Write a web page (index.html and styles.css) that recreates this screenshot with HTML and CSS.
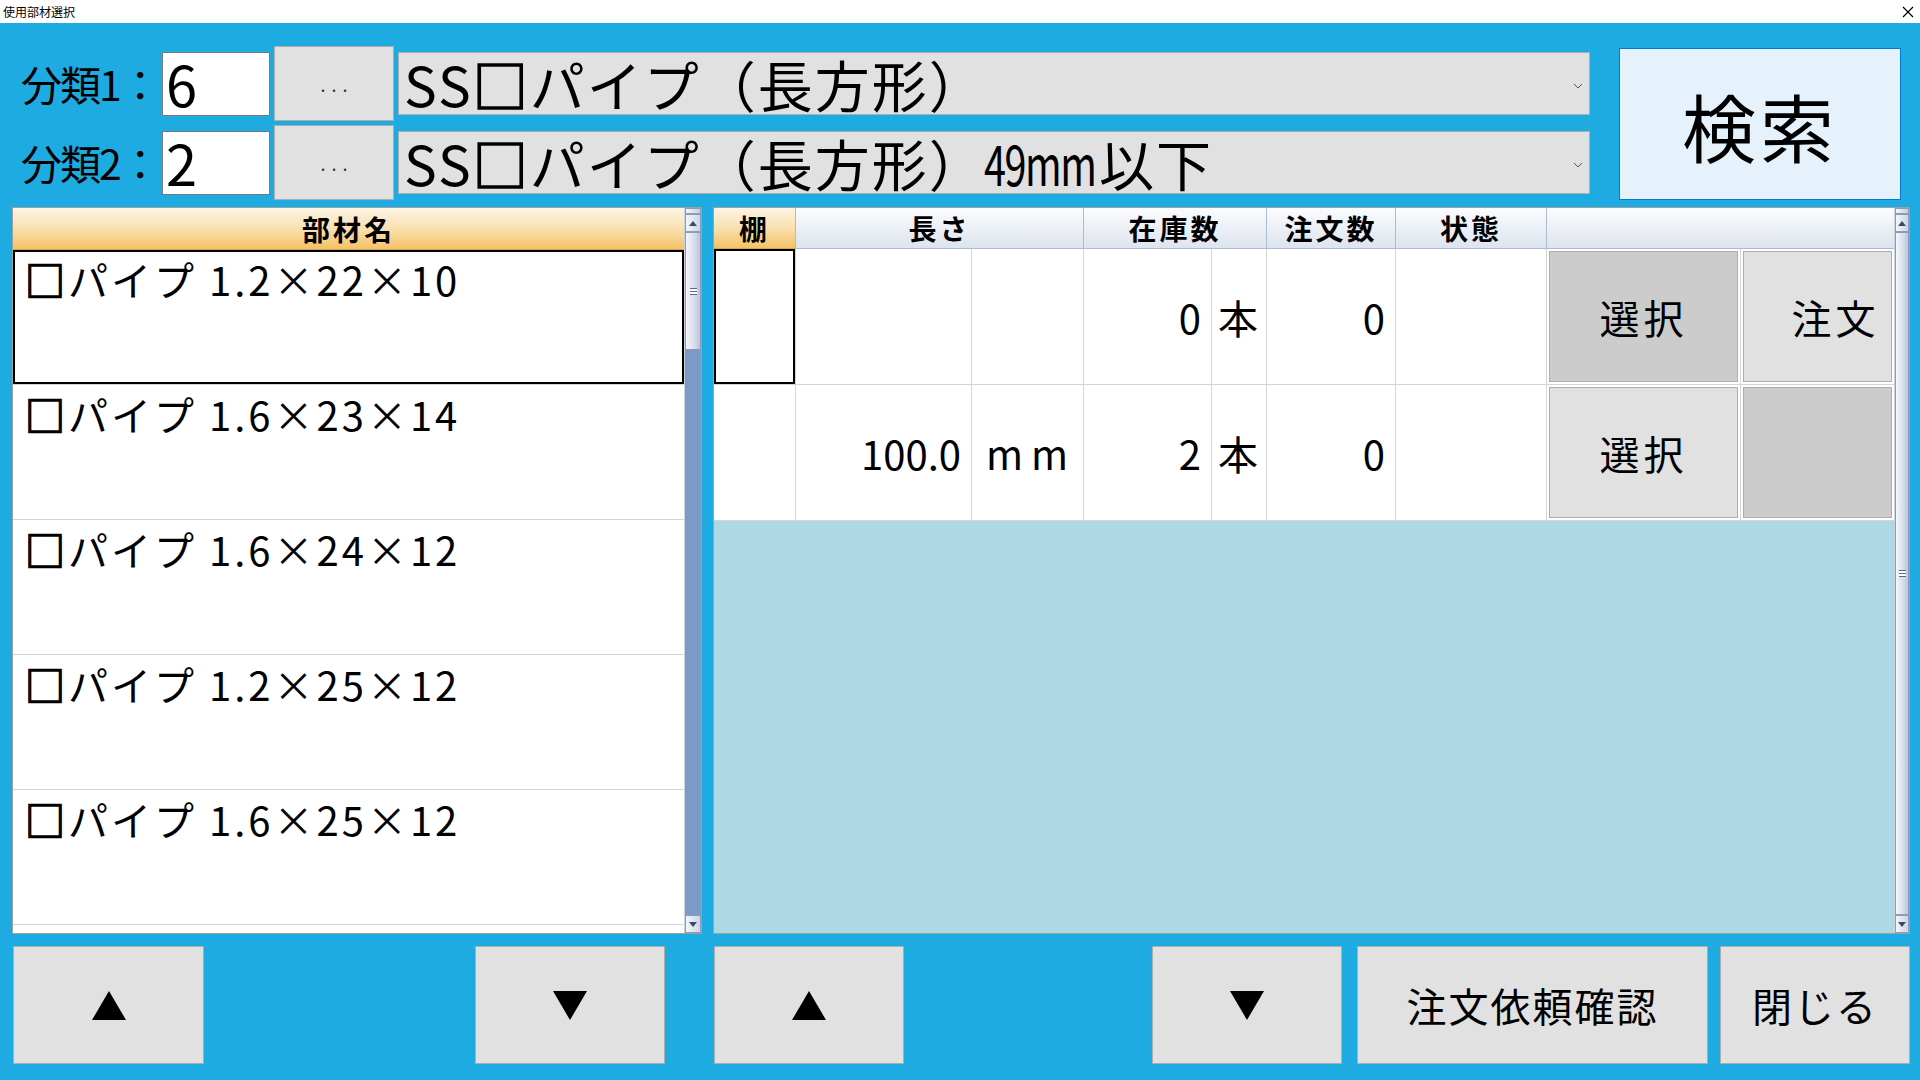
FILE: index.html
```html
<!DOCTYPE html>
<html lang="ja">
<head>
    <meta charset="UTF-8">
    <title>使用部材選択</title>
    <link rel="stylesheet" href="styles.css">
</head>
<body>
    <div class="titlebar">
        <span class="title">使用部材選択</span>
        <svg class="close" width="12" height="12" viewBox="0 0 12 12"><path d="M1 1L11 11M11 1L1 11" stroke="#000" stroke-width="1.2" fill="none"/></svg>
    </div>

    <div class="window">
        <div class="top">
            <div class="filters">
                <div class="filter-row">
                    <label class="filter-label">分類1：</label>
                    <div class="code-box">6</div>
                    <button class="dots-btn">...</button>
                    <div class="combo">
                        <span class="combo-text">SS<span class="sq">□</span>パイプ（長方形）</span>
                        <svg class="chevron" width="10" height="6" viewBox="0 0 10 6"><path d="M1 1L5 5L9 1" stroke="#555" stroke-width="1" fill="none"/></svg>
                    </div>
                </div>
                <div class="filter-row">
                    <label class="filter-label">分類2：</label>
                    <div class="code-box">2</div>
                    <button class="dots-btn">...</button>
                    <div class="combo">
                        <span class="combo-text">SS<span class="sq">□</span>パイプ（長方形） <span class="narrow">49mm</span>以下</span>
                        <svg class="chevron" width="10" height="6" viewBox="0 0 10 6"><path d="M1 1L5 5L9 1" stroke="#555" stroke-width="1" fill="none"/></svg>
                    </div>
                </div>
            </div>
            <button class="search-btn">検索</button>
        </div>

        <div class="middle">
            <!-- 部材リスト -->
            <div class="list">
                <div class="list-main">
                    <div class="list-head">部材名</div>
                    <div class="list-row current"><span class="sq">□</span>パイプ 1.2×22×10</div>
                    <div class="list-row"><span class="sq">□</span>パイプ 1.6×23×14</div>
                    <div class="list-row"><span class="sq">□</span>パイプ 1.6×24×12</div>
                    <div class="list-row"><span class="sq">□</span>パイプ 1.2×25×12</div>
                    <div class="list-row"><span class="sq">□</span>パイプ 1.6×25×12</div>
                </div>
                <div class="vscroll">
                    <div class="sb-split"></div>
                    <div class="sb-arrow"><svg width="8" height="5" viewBox="0 0 8 5"><path d="M0 5L4 0L8 5Z" fill="#3d4a63"/></svg></div>
                    <div class="sb-thumb short"><span class="grip"></span></div>
                    <div class="sb-track"></div>
                    <div class="sb-arrow"><svg width="8" height="5" viewBox="0 0 8 5"><path d="M0 0L4 5L8 0Z" fill="#3d4a63"/></svg></div>
                </div>
            </div>

            <!-- 在庫グリッド -->
            <div class="grid-wrap">
                <div class="grid-main">
                    <div class="grid-head">
                        <div class="gh current">棚</div>
                        <div class="gh">長さ</div>
                        <div class="gh">在庫数</div>
                        <div class="gh">注文数</div>
                        <div class="gh">状態</div>
                        <div class="gh"></div>
                    </div>
                    <div class="grid-row">
                        <div class="gc focus"></div>
                        <div class="gc num"></div>
                        <div class="gc unit"></div>
                        <div class="gc num">0</div>
                        <div class="gc unit">本</div>
                        <div class="gc num">0</div>
                        <div class="gc"></div>
                        <div class="gc btn-cell"><button class="cell-btn pressed">選択</button></div>
                        <div class="gc btn-cell"><button class="cell-btn order">注文</button></div>
                    </div>
                    <div class="grid-row">
                        <div class="gc"></div>
                        <div class="gc num">100.0</div>
                        <div class="gc unit mm">mm</div>
                        <div class="gc num">2</div>
                        <div class="gc unit">本</div>
                        <div class="gc num">0</div>
                        <div class="gc"></div>
                        <div class="gc btn-cell"><button class="cell-btn">選択</button></div>
                        <div class="gc btn-cell"><button class="cell-btn pressed"></button></div>
                    </div>
                    <div class="grid-empty"></div>
                </div>
                <div class="vscroll thin">
                    <div class="sb-split"></div>
                    <div class="sb-arrow"><svg width="8" height="5" viewBox="0 0 8 5"><path d="M0 5L4 0L8 5Z" fill="#3d4a63"/></svg></div>
                    <div class="sb-thumb full"><span class="grip"></span></div>
                    <div class="sb-arrow"><svg width="8" height="5" viewBox="0 0 8 5"><path d="M0 0L4 5L8 0Z" fill="#3d4a63"/></svg></div>
                </div>
            </div>
        </div>

        <div class="bottom">
            <button class="btn btn-up-left"><svg width="34" height="29" viewBox="0 0 34 29"><path d="M17 0L34 29H0Z" fill="#000"/></svg></button>
            <button class="btn btn-down-left"><svg width="34" height="29" viewBox="0 0 34 29"><path d="M0 0H34L17 29Z" fill="#000"/></svg></button>
            <button class="btn btn-up-right"><svg width="34" height="29" viewBox="0 0 34 29"><path d="M17 0L34 29H0Z" fill="#000"/></svg></button>
            <button class="btn btn-down-right"><svg width="34" height="29" viewBox="0 0 34 29"><path d="M0 0H34L17 29Z" fill="#000"/></svg></button>
            <button class="btn btn-confirm">注文依頼確認</button>
            <button class="btn btn-close">閉じる</button>
        </div>
    </div>
</body>
</html>
```

FILE: styles.css
```css
* {
    margin: 0;
    padding: 0;
    box-sizing: border-box;
}

body {
    width: 1920px;
    height: 1080px;
    overflow: hidden;
    background: #1eabe2;
    font-family: "Noto Sans CJK JP", "Noto Sans", sans-serif;
    color: #000;
}

button {
    font-family: inherit;
    color: #000;
    cursor: pointer;
}

.titlebar {
    height: 23px;
    background: #fff;
    display: flex;
    align-items: center;
    justify-content: space-between;
    padding: 0 6px 0 3px;
}

.title {
    font-size: 12px;
    line-height: 1;
}

/* square glyph in pipe names, drawn heavier like the original font */
.sq {
    -webkit-text-stroke: 1.6px #000;
}

/* top filter area */
.top {
    display: flex;
    padding: 23px 19px 0 21px;
    height: 178px;
}

.filters {
    flex: 1;
    display: flex;
    flex-direction: column;
    gap: 4px;
}

.filter-row {
    height: 75px;
    display: flex;
    align-items: center;
}

.filter-label {
    width: 141px;
    font-size: 41px;
    line-height: 1;
    white-space: nowrap;
    letter-spacing: -2px;
}

.code-box {
    width: 108px;
    height: 64px;
    background: #fff;
    border: 1px solid #7a7a7a;
    font-size: 56px;
    line-height: 60px;
    padding-left: 3px;
    margin-right: 4px;
}

.dots-btn {
    width: 120px;
    height: 75px;
    background: #e1e1e1;
    border: 1px solid #adadad;
    font-size: 18px;
    letter-spacing: 6px;
    padding-left: 6px;
    margin-right: 4px;
    color: #333;
}

.combo {
    flex: 1;
    height: 63px;
    background: #e1e1e1;
    border: 1px solid #adadad;
    display: flex;
    align-items: center;
    justify-content: space-between;
    padding: 0 6px 0 5px;
}

.combo-text {
    font-size: 55px;
    line-height: 1;
    white-space: nowrap;
    letter-spacing: 2px;
    word-spacing: -16px;
}

/* latin part of the label is set much narrower in the original */
.combo-text .narrow {
    display: inline-block;
    transform: scaleX(0.72);
    transform-origin: left center;
    letter-spacing: -2px;
    margin-right: -40px;
}

.chevron {
    margin-top: 4px;
}

.search-btn {
    width: 282px;
    height: 152px;
    margin: 2px 0 0 29px;
    background: #e5f1fb;
    border: 1px solid #0078d7;
    font-size: 74px;
    letter-spacing: 4px;
}

/* middle */
.middle {
    display: flex;
    gap: 11px;
    height: 727px;
    padding: 0 10px 0 12px;
    margin-top: 6px;
}

.list {
    width: 690px;
    display: flex;
    background: #fff;
    border: 1px solid #a0a0a0;
}

.list-main {
    flex: 1;
}

.list-head {
    height: 42px;
    background: linear-gradient(#fdf4e4 0%, #f9deaa 55%, #f4c266 100%);
    border-bottom: 1px solid #d9a54e;
    font-size: 28px;
    font-weight: 700;
    line-height: 1;
    letter-spacing: 3px;
    display: flex;
    align-items: center;
    justify-content: center;
}

.list-row {
    height: 135px;
    border-bottom: 1px solid #d4d4d4;
    font-size: 40px;
    line-height: 1.45;
    padding: 0 0 0 12px;
    white-space: nowrap;
    letter-spacing: 3px;
}

.list-row.current {
    box-shadow: inset 0 0 0 2px #000;
}

/* scrollbars */
.vscroll {
    width: 17px;
    display: flex;
    flex-direction: column;
    background: #7b9bc6;
    border-left: 1px solid #c8d2e0;
}

.vscroll.thin {
    width: 15px;
    background: #e9edf4;
}

.sb-split {
    height: 6px;
    background: linear-gradient(90deg, #f4f6fa, #c3cde0);
    border: 1px solid #8b9bb8;
}

.sb-arrow {
    height: 18px;
    background: linear-gradient(90deg, #f4f6fa, #ccd5e6);
    border: 1px solid #8b9bb8;
    display: flex;
    align-items: center;
    justify-content: center;
}

.sb-thumb {
    background: linear-gradient(90deg, #f5f7fb, #d7deeb 60%, #b9c5da);
    border: 1px solid #8b9bb8;
    display: flex;
    align-items: center;
    justify-content: center;
}

.sb-thumb.short {
    height: 118px;
}

.sb-thumb.full {
    flex: 1;
}

.sb-track {
    flex: 1;
}

.grip {
    width: 7px;
    height: 7px;
    border-top: 1px solid #5b6a86;
    border-bottom: 1px solid #5b6a86;
    background: linear-gradient(#fff 0, #fff 2px, #5b6a86 2px, #5b6a86 3px, #fff 3px);
}

/* grid */
.grid-wrap {
    flex: 1;
    display: flex;
    border: 1px solid #a0a0a0;
    background: #add8e6;
}

.grid-main {
    flex: 1;
    display: flex;
    flex-direction: column;
}

.grid-head {
    display: grid;
    grid-template-columns: 82px 288px 183px 129px 151px 1fr;
    height: 41px;
    background: #fff;
}

.gh {
    background: linear-gradient(#fbfcfe, #dde4ee);
    border-right: 1px solid #a9bcd5;
    border-bottom: 1px solid #a9bcd5;
    font-size: 28px;
    font-weight: 700;
    line-height: 1;
    letter-spacing: 3px;
    display: flex;
    align-items: center;
    justify-content: center;
    white-space: nowrap;
}

.gh.current {
    background: linear-gradient(#fdf4e4 0%, #f9deaa 55%, #f4c266 100%);
    border-bottom-color: #d9a54e;
}

.gh:last-child {
    border-right: none;
}

.grid-row {
    display: grid;
    grid-template-columns: 82px 176px 112px 128px 55px 129px 151px 194px 1fr;
    height: 136px;
    background: #fff;
}

.gc {
    border-right: 1px solid #d5d5d5;
    border-bottom: 1px solid #d5d5d5;
    font-size: 40px;
    display: flex;
    align-items: center;
    white-space: nowrap;
}

.gc.num {
    justify-content: flex-end;
    padding-right: 10px;
}

.gc.unit {
    padding-left: 6px;
}

.gc.mm {
    padding-left: 14px;
    letter-spacing: 8px;
}

.gc.focus {
    box-shadow: inset 0 0 0 2px #000;
}

.gc.btn-cell {
    padding: 2px;
}

.gc:last-child {
    border-right: none;
}

.cell-btn {
    width: 100%;
    height: 100%;
    background: #e1e1e1;
    border: 1px solid #adadad;
    font-size: 40px;
    letter-spacing: 4px;
}

.cell-btn.order {
    padding-left: 36px;
}

.cell-btn.pressed {
    background: #cccccc;
}

.grid-empty {
    flex: 1;
    background: #add8e6;
}

/* bottom buttons */
.bottom {
    display: flex;
    height: 118px;
    margin-top: 12px;
    padding-left: 13px;
}

.btn {
    height: 118px;
    background: #e1e1e1;
    border: 1px solid #adadad;
    display: flex;
    align-items: center;
    justify-content: center;
    font-size: 40px;
    letter-spacing: 2px;
}

.btn-up-left { width: 191px; }
.btn-down-left { width: 190px; margin-left: 271px; }
.btn-up-right { width: 190px; margin-left: 49px; }
.btn-down-right { width: 190px; margin-left: 248px; }
.btn-confirm { width: 351px; margin-left: 15px; }
.btn-close { width: 190px; margin-left: 12px; }
```
